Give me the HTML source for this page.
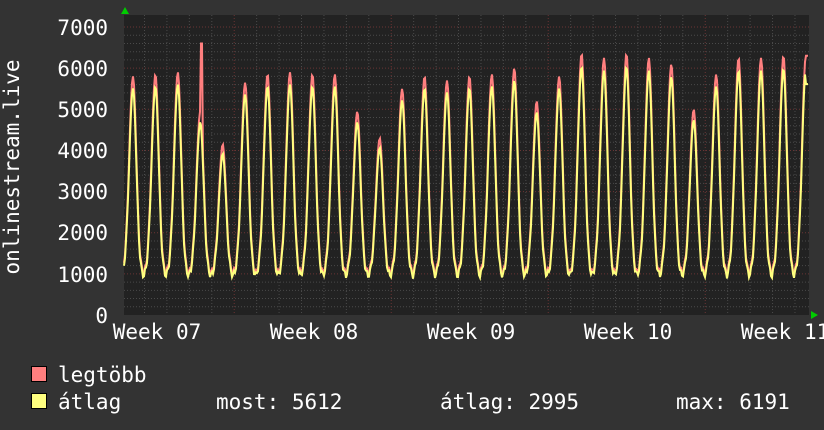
<!DOCTYPE html><html><head><meta charset="utf-8"><style>
html,body{margin:0;padding:0;background:#333;}
body{width:824px;height:430px;overflow:hidden;position:relative;font-family:"DejaVu Sans Mono","Liberation Mono",monospace;color:#fff}
svg{position:absolute;left:0;top:0}
</style></head><body>
<svg id="g" width="824" height="430" xmlns="http://www.w3.org/2000/svg" font-family="DejaVu Sans Mono, Liberation Mono, monospace" font-size="21" fill="#fff">
<rect x="124" y="15" width="685" height="300" fill="#222"/>
<g id="grid"></g>
<polyline id="mx" fill="none" stroke="#ff7f7f" stroke-width="2"/>
<polyline id="av" fill="none" stroke="#ffff7f" stroke-width="2"/>
<polygon points="121,14 125,7 129,14" fill="#0c0"/>
<polygon points="811,311 818,315 811,319" fill="#0c0"/>
<g text-anchor="end">
<text x="108" y="35">7000</text><text x="108" y="76">6000</text><text x="108" y="117">5000</text><text x="108" y="158">4000</text><text x="108" y="199">3000</text><text x="108" y="240">2000</text><text x="108" y="282">1000</text><text x="108" y="323">0</text>
</g>
<g text-anchor="middle">
<text x="157" y="339">Week 07</text><text x="314" y="339">Week 08</text><text x="471" y="339">Week 09</text><text x="628" y="339">Week 10</text><text x="785" y="339">Week 11</text>
</g>
<text transform="translate(19,167) rotate(-90)" text-anchor="middle">onlinestream.live</text>
<rect x="31.5" y="366.5" width="15" height="15" fill="#ff7f7f" stroke="#000"/>
<rect x="31.5" y="393.5" width="15" height="15" fill="#ffff7f" stroke="#000"/>
<text x="58" y="382">legtöbb</text>
<text x="58" y="409">átlag</text>
<text x="216" y="409">most: 5612</text>
<text x="440" y="409">átlag: 2995</text>
<text x="676" y="409">max: 6191</text>
</svg>
<script>
var ns="http://www.w3.org/2000/svg",grid=document.getElementById('grid');
function ln(x1,y1,x2,y2,c){var l=document.createElementNS(ns,'line');l.setAttribute('x1',x1);l.setAttribute('y1',y1);l.setAttribute('x2',x2);l.setAttribute('y2',y2);l.setAttribute('stroke',c);l.setAttribute('stroke-dasharray','1,2');grid.appendChild(l);}
function Y(v){return 315-v*0.04114;}
for(var v=200;v<=7000;v+=200){ln(124,Y(v),809,Y(v),v%1000==0?'#6a3434':'#4a4a4a');}
for(var x=144.5;x<809;x+=22.43){var maj=Math.abs(((x-234)/156.9)-Math.round((x-234)/156.9))<0.02;ln(x,15,x,315,maj?'#6a3434':'#4a4a4a');}
var pk=[5800,5850,5900,4950,4150,5650,5850,5900,5850,5850,4950,4300,5500,5800,5700,5800,5850,6000,5200,5800,6350,6250,6350,6250,6100,5000,5850,6250,6250,6300,6300];
var mn=[],av=[];
for(var x=124;x<=808;x+=1){
 var t=(x-133)/22.43,i=Math.round(t),d=t-i;
 if(i<0)i=0;if(i>30)i=30;
 var p=pk[i];
 var s=(d<0)?Math.exp(-Math.pow(d/0.24,2)):Math.exp(-Math.pow(d/0.21,2));
 var base=1000+80*Math.sin(x*1.7);
 var m=base+(p-base)*s;
 if(x==201||x==202)m=6600;
 if(x>=806)m=6300;
 var a=base-60+(p*0.96-base)*s;
 if(x>=806)a=5612;
 mn.push(x+','+Y(m).toFixed(1));av.push(x+','+Y(a).toFixed(1));
}
document.getElementById('mx').setAttribute('points',mn.join(' '));
document.getElementById('av').setAttribute('points',av.join(' '));
</script>
</body></html>
